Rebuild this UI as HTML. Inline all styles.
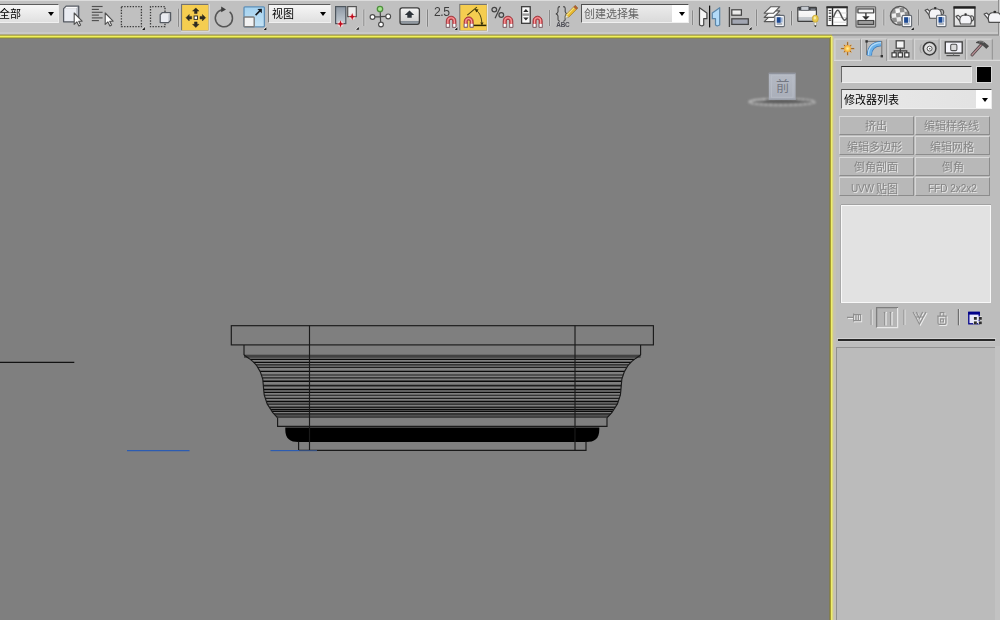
<!DOCTYPE html>
<html lang="zh"><head><meta charset="utf-8"><title>3ds Max</title>
<style>
html,body{margin:0;padding:0}
body{width:1000px;height:620px;overflow:hidden;position:relative;background:#bdbdbd;font-family:"Liberation Sans",sans-serif;font-size:11px}
.a{position:absolute;display:block}
svg text{font-family:"Liberation Sans",sans-serif}
svg text.cj{font-family:"Liberation Sans","Noto Sans CJK SC",sans-serif}
#tb{left:0;top:0;width:1000px;height:36px;background:#c0c0c0}
#vp{left:0;top:38px;width:830px;height:582px;background:#7f7f7f}
#pn{left:833px;top:36px;width:167px;height:584px;background:#bdbdbd}
.dd{box-sizing:border-box;border-top:1.4px solid #5c5c5c;border-left:1.3px solid #7a7a7a;border-bottom:1px solid #f0f0f0;border-right:1px solid #ececec;background:linear-gradient(#f6f6f6,#e0e0e0)}
.arr{width:0;height:0;border-left:3.6px solid transparent;border-right:3.6px solid transparent;border-top:4px solid #000}
.btn{height:19.2px;background:#b8b8b8;box-sizing:border-box;border-top:1.2px solid #dadada;border-left:1.2px solid #d6d6d6;border-bottom:1.6px solid #8c8c8c;border-right:1.6px solid #8c8c8c}
.em{will-change:transform;font-size:11px;line-height:13px;color:#858585;text-shadow:1px 1px 0 #e4e4e4}
</style></head><body>
<div id="tb" class="a"></div>
<div class="a" style="left:0;top:0;width:1000px;height:1.3px;background:#dcdcdc"></div>
<div class="a" style="left:0;top:32.4px;width:998px;height:1.5px;background:#c9c9c9"></div>
<div class="a" style="left:0;top:33.9px;width:998.5px;height:1.9px;background:#9d9d9d"></div>
<div class="a" style="left:998px;top:0;width:1px;height:35px;background:#8e8e8e"></div>
<div class="a" style="left:999px;top:0;width:1px;height:36px;background:#cdcdcd"></div>
<div id="pn" class="a"></div>
<div id="vp" class="a"></div>
<!-- active viewport border (yellow, softly blurred as in source) -->
<div class="a" style="left:0;top:34px;width:832px;height:1px;background:#aea986"></div>
<div class="a" style="left:0;top:35px;width:832.4px;height:1px;background:#b6b048"></div>
<div class="a" style="left:0;top:36px;width:832.4px;height:1px;background:#eff05e"></div>
<div class="a" style="left:0;top:37px;width:832px;height:1px;background:#bebe3c"></div>
<div class="a" style="left:0;top:38px;width:830px;height:1px;background:#82825c"></div>
<div class="a" style="left:829px;top:38px;width:1px;height:582px;background:#807c54"></div>
<div class="a" style="left:830px;top:37px;width:1px;height:583px;background:#a69c30"></div>
<div class="a" style="left:831px;top:36px;width:1px;height:584px;background:#eeee6c"></div>
<div class="a" style="left:832px;top:36px;width:1px;height:584px;background:#dcd880"></div>
<div class="a" style="left:833px;top:37px;width:1px;height:583px;background:#c9c4a6"></div>
<div class="a" style="left:834px;top:38px;width:1.6px;height:582px;background:#c4c0b6"></div>
<!-- toolbar dropdowns -->
<div class="a dd" style="left:-3px;top:3.6px;width:62px;height:19px"></div>
<div class="a arr" style="left:47.8px;top:11.8px"></div>
<div class="a dd" style="left:268.4px;top:3.6px;width:63px;height:19px"></div>
<div class="a arr" style="left:320.4px;top:11.8px"></div>
<div class="a dd" style="left:581px;top:3.6px;width:108px;height:19px;background:linear-gradient(#ececec,#dadada);border-left:1.6px solid #555;border-top:1.6px solid #4e4e4e"></div>
<div class="a" style="left:672px;top:5.4px;width:16px;height:16.2px;background:#fff"></div>
<div class="a arr" style="left:678.5px;top:11.8px"></div>
<!-- command panel widgets -->
<div class="a" style="left:840.6px;top:65.6px;width:131.6px;height:17.4px;box-sizing:border-box;background:#e1e1e1;border-top:1.8px solid #2c2c2c;border-left:1.6px solid #686868;border-bottom:1px solid #efefef;border-right:1px solid #ebebeb"></div>
<div class="a" style="left:976.2px;top:65.6px;width:15.8px;height:17.6px;background:#d8d8d8"></div>
<div class="a" style="left:977.2px;top:66.6px;width:13.9px;height:15.9px;background:#000"></div>
<div class="a" style="left:840.6px;top:88.6px;width:151.6px;height:20.2px;box-sizing:border-box;background:linear-gradient(90deg,#e9e9e9,#e2e2e2);border-top:1.8px solid #4e4e4e;border-left:1.8px solid #6c6c6c;border-bottom:1px solid #eee;border-right:1px solid #eaeaea"></div>
<div class="a" style="left:976.4px;top:90.4px;width:15px;height:17.5px;background:#fff"></div>
<div class="a arr" style="left:982.4px;top:97.6px"></div>
<div class="a btn" style="left:839px;top:115.8px;width:75px"></div>
<div class="a btn" style="left:914.7px;top:115.8px;width:75.8px"></div>
<div class="a btn" style="left:839px;top:136.3px;width:75px"></div>
<div class="a btn" style="left:914.7px;top:136.3px;width:75.8px"></div>
<div class="a btn" style="left:839px;top:156.8px;width:75px"></div>
<div class="a btn" style="left:914.7px;top:156.8px;width:75.8px"></div>
<div class="a btn" style="left:839px;top:177.3px;width:75px"></div>
<div class="a btn" style="left:914.7px;top:177.3px;width:75.8px"></div>
<div class="a em" style="left:850.7px;top:182.2px;font-size:10px;letter-spacing:-0.2px">UVW</div>
<div class="a em" style="left:928.3px;top:182.2px;font-size:10px;letter-spacing:0;white-space:nowrap">FFD 2x2x2</div>
<div class="a" style="left:841px;top:204.6px;width:149.6px;height:98.6px;background:#e2e2e2;border:1.2px solid #f8f8f8;box-sizing:border-box;box-shadow:0 -1px 0 #a2a2a2,-1px 0 0 #a8a8a8"></div>
<div class="a" style="left:837.4px;top:337.5px;width:158.4px;height:1.3px;background:#d2d2d2"></div>
<div class="a" style="left:837.6px;top:338.8px;width:157.8px;height:1.8px;background:#282828"></div>
<div class="a" style="left:837.6px;top:340.6px;width:157.8px;height:1px;background:#c8c8c8"></div>
<div class="a" style="left:836px;top:347px;width:159.6px;height:274px;background:#bbb;border-top:1.4px solid #929292;border-left:1.4px solid #8e8e8e;border-right:1.4px solid #d8d8d8;box-sizing:border-box"></div>
<div class="a" style="left:995.4px;top:346px;width:4.6px;height:274px;background:#c2c2c2"></div>
<svg class="a" style="left:0;top:38px" width="830" height="582"><rect x="244" y="316.70" width="396.60" height="3.1" fill="#424242"/><line x1="250.25" y1="321.40" x2="634.35" y2="321.40" stroke="#0a0a0a" stroke-width="1.35"/><line x1="253.66" y1="324.30" x2="630.94" y2="324.30" stroke="#0a0a0a" stroke-width="1.35"/><line x1="256.12" y1="326.90" x2="628.48" y2="326.90" stroke="#1e1e1e" stroke-width="1.15"/><line x1="257.73" y1="329.40" x2="626.87" y2="329.40" stroke="#1e1e1e" stroke-width="1.25"/><line x1="260.08" y1="333.40" x2="624.52" y2="333.40" stroke="#0a0a0a" stroke-width="1.4"/><line x1="261.37" y1="337.00" x2="623.23" y2="337.00" stroke="#1e1e1e" stroke-width="1.15"/><line x1="262.37" y1="339.90" x2="622.23" y2="339.90" stroke="#1e1e1e" stroke-width="1.15"/><line x1="262.95" y1="343.30" x2="621.65" y2="343.30" stroke="#0a0a0a" stroke-width="1.4"/><line x1="263.32" y1="347.60" x2="621.28" y2="347.60" stroke="#1e1e1e" stroke-width="1.9"/><line x1="263.66" y1="351.50" x2="620.94" y2="351.50" stroke="#0a0a0a" stroke-width="1.35"/><line x1="263.94" y1="354.40" x2="620.66" y2="354.40" stroke="#0a0a0a" stroke-width="1.35"/><line x1="264.27" y1="357.20" x2="620.33" y2="357.20" stroke="#1e1e1e" stroke-width="1.15"/><line x1="265.35" y1="360.40" x2="619.25" y2="360.40" stroke="#1e1e1e" stroke-width="1.3"/><line x1="266.39" y1="363.50" x2="618.21" y2="363.50" stroke="#0a0a0a" stroke-width="1.4"/><line x1="267.39" y1="366.20" x2="617.21" y2="366.20" stroke="#1e1e1e" stroke-width="1.3"/><line x1="269.43" y1="369.40" x2="615.17" y2="369.40" stroke="#1e1e1e" stroke-width="1.9"/><line x1="270.89" y1="371.70" x2="613.71" y2="371.70" stroke="#0a0a0a" stroke-width="1.2"/><line x1="271.91" y1="373.30" x2="612.69" y2="373.30" stroke="#0a0a0a" stroke-width="1.2"/><line x1="274.00" y1="376.00" x2="610.60" y2="376.00" stroke="#1e1e1e" stroke-width="1.3"/><path d="M275.10,377.20 L609.50,377.20 L607.00,380.10 L277.6,380.10 Z" fill="#424242"/><polyline fill="none" stroke="#1a1a1a" stroke-width="1.15" points="244.00,317.00 249.00,320.40 253.00,323.60 256.50,327.30 260.20,333.60 262.75,341.00 263.75,352.50 264.20,357.00 267.20,365.90 272.80,374.70 277.40,379.70"/><polyline fill="none" stroke="#1a1a1a" stroke-width="1.15" points="640.60,317.00 635.60,320.40 631.60,323.60 628.10,327.30 624.40,333.60 621.85,341.00 620.85,352.50 620.40,357.00 617.40,365.90 611.80,374.70 607.20,379.70"/><rect x="231.3" y="287.70" width="422.10" height="19.20" fill="none" stroke="#1a1a1a" stroke-width="1.15"/><polyline fill="none" stroke="#1a1a1a" stroke-width="1.15" points="244.00,306.90 244.00,317.00"/><polyline fill="none" stroke="#1a1a1a" stroke-width="1.15" points="640.60,306.90 640.60,317.00"/><polyline fill="none" stroke="#1a1a1a" stroke-width="1.15" points="277.60,379.70 277.60,388.40 607.00,388.40 607.00,379.70"/><path fill="#000" d="M285.3,389.40 L599.3,389.40 L599.3,391.40 C599.3,400.90 594.3,403.90 586.3,403.90 L298.3,403.90 C290.3,403.90 285.3,400.90 285.3,391.40 Z"/><polyline fill="none" stroke="#1a1a1a" stroke-width="1.15" points="298.60,403.60 298.60,412.40 586.00,412.40 586.00,403.60"/><line x1="309.50" y1="287.70" x2="309.50" y2="412.40" stroke="#1a1a1a" stroke-width="1.15"/><line x1="575.00" y1="287.70" x2="575.00" y2="412.40" stroke="#1a1a1a" stroke-width="1.15"/><line x1="0.00" y1="324.40" x2="74.30" y2="324.40" stroke="#121212" stroke-width="1.15"/><line x1="127.00" y1="412.60" x2="189.50" y2="412.60" stroke="#2c5cb2" stroke-width="1.15"/><line x1="270.50" y1="412.60" x2="299.00" y2="412.60" stroke="#2c5cb2" stroke-width="1.15"/><line x1="299.00" y1="412.70" x2="317.00" y2="412.70" stroke="#3a5a94" stroke-width="1.0"/></svg>
<svg class="a" style="left:740px;top:60px" width="90" height="60" viewBox="740 60 90 60"><defs><linearGradient id="lgvc" x1="0" y1="0" x2="0" y2="1"><stop offset="0" stop-color="#a6abb6"/><stop offset="0.12" stop-color="#b4b9c3"/><stop offset="1" stop-color="#a9aeb9"/></linearGradient><radialGradient id="rgsh"><stop offset="0" stop-color="#5e5e5e"/><stop offset="0.7" stop-color="#6c6c6c"/><stop offset="1" stop-color="#7e7e7e" stop-opacity="0"/></radialGradient></defs><filter id="fb" x="-10%" y="-60%" width="120%" height="220%"><feGaussianBlur stdDeviation="0.8"/></filter><g filter="url(#fb)"><ellipse cx="782" cy="102" rx="33" ry="3.2" fill="none" stroke="#9a9a9a" stroke-width="1.9"/><ellipse cx="782" cy="102" rx="33" ry="3.2" fill="none" stroke="#bebebe" stroke-width="1.4" stroke-dasharray="2.2 2.6"/><path d="M749.2,102.4 C750,100.2 757,99.2 766,99" fill="none" stroke="#cacaca" stroke-width="1.2"/><ellipse cx="782" cy="101.7" rx="29" ry="2.2" fill="#6e6e6e"/><ellipse cx="782" cy="101.2" rx="19" ry="2.3" fill="#5e5e5e"/></g><rect x="768.8" y="72.8" width="26.8" height="27" fill="url(#lgvc)"/><rect x="768.8" y="72.8" width="26.8" height="1.2" fill="#8e929c"/><rect x="768.8" y="98.6" width="26.8" height="1.2" fill="#9a9ea8"/><rect x="771.4" y="75.6" width="21.6" height="21.6" fill="none" stroke="#b9bec8" stroke-width="0.8"/></svg>
<svg class="a" style="left:0;top:0;will-change:transform" width="1000" height="36" font-family="Liberation Sans, sans-serif"><path d="M63.6,8.6 L66.1,6.1 L78.7,6.1 L76.2,8.6 Z" fill="#fbfbfd"/><path d="M76.2,8.6 L78.7,6.1 L78.7,19.3 L76.2,21.8 Z" fill="#bcc0c8"/><rect x="63.6" y="8.6" width="12.6" height="13.2" fill="#e9ebf1"/><path d="M63.6,8.6 L66.1,6.1 L78.7,6.1 L78.7,19.3 L76.2,21.8 L63.6,21.8 Z" fill="none" stroke="#555a62" stroke-width="1.25" stroke-linejoin="round"/><path transform="translate(74.2,13)" d="M0,0 L0,11.4 L2.7,8.9 L4.7,12.9 L6.4,12 L4.5,8.2 L7.9,8.2 Z" fill="#fff" stroke="#505050" stroke-width="1.1" stroke-linejoin="round"/><line x1="91.8" y1="6.5" x2="102.6" y2="6.5" stroke="#515151" stroke-width="1.15"/><line x1="91.8" y1="9.4" x2="98.9" y2="9.4" stroke="#515151" stroke-width="1.15"/><line x1="91.8" y1="12.3" x2="102.6" y2="12.3" stroke="#515151" stroke-width="1.15"/><line x1="91.8" y1="15.1" x2="98.9" y2="15.1" stroke="#515151" stroke-width="1.15"/><line x1="91.8" y1="17.9" x2="102.6" y2="17.9" stroke="#515151" stroke-width="1.15"/><line x1="91.8" y1="20.6" x2="98.9" y2="20.6" stroke="#515151" stroke-width="1.15"/><path transform="translate(105.2,13)" d="M0,0 L0,11.4 L2.7,8.9 L4.7,12.9 L6.4,12 L4.5,8.2 L7.9,8.2 Z" fill="#fff" stroke="#505050" stroke-width="1.1" stroke-linejoin="round"/><rect x="121.4" y="6.6" width="20" height="20.1" fill="none" stroke="#3c3c3c" stroke-width="1.3" stroke-dasharray="1.4 1.4"/><path d="M141.1,29.9 L144.9,26.1 L144.9,29.9 Z" fill="#e8e8e8"/><path d="M142.1,29.9 L144.9,27.1 L144.9,29.9 Z" fill="#111"/><path d="M165,12 L165,6.6 L150.5,6.6 L150.5,26.7 L165,26.7 L165,23" fill="none" stroke="#3c3c3c" stroke-width="1.3" stroke-dasharray="1.4 1.4"/><path d="M160.2,14.7 L162.4,12.5 L170.6,12.5 L168.4,14.7 Z" fill="#fbfbfd"/><path d="M168.4,14.7 L170.6,12.5 L170.6,20.4 L168.4,22.6 Z" fill="#bcc0c8"/><rect x="160.2" y="14.7" width="8.2" height="7.9" fill="#e9ebf1"/><path d="M160.2,14.7 L162.4,12.5 L170.6,12.5 L170.6,20.4 L168.4,22.6 L160.2,22.6 Z" fill="none" stroke="#555a62" stroke-width="1.25" stroke-linejoin="round"/><line x1="177.5" y1="8.8" x2="177.5" y2="26.8" stroke="#d2d2d2" stroke-width="0.9"/><line x1="178.4" y1="8.8" x2="178.4" y2="26.8" stroke="#747474" stroke-width="1"/><line x1="179.3" y1="8.8" x2="179.3" y2="26.8" stroke="#cfcfcf" stroke-width="0.9"/><rect x="181" y="3.8" width="28.6" height="27.8" fill="#e4e4e4"/><rect x="181" y="3.8" width="27.5" height="26.7" fill="#747474"/><rect x="182.1" y="5.0" width="26.3" height="25.4" fill="#f5cd50"/><path transform="translate(195.8,17.7) rotate(0)" d="M0,-9.8 L3.2,-6.6 L1.3,-6.6 L1.3,-4.2 L-1.3,-4.2 L-1.3,-6.6 L-3.2,-6.6 Z" fill="#2c2a22" stroke="#2c2a22" stroke-width="0.5" stroke-linejoin="round"/><path transform="translate(195.8,17.7) rotate(90)" d="M0,-9.8 L3.2,-6.6 L1.3,-6.6 L1.3,-4.2 L-1.3,-4.2 L-1.3,-6.6 L-3.2,-6.6 Z" fill="#2c2a22" stroke="#2c2a22" stroke-width="0.5" stroke-linejoin="round"/><path transform="translate(195.8,17.7) rotate(180)" d="M0,-9.8 L3.2,-6.6 L1.3,-6.6 L1.3,-4.2 L-1.3,-4.2 L-1.3,-6.6 L-3.2,-6.6 Z" fill="#2c2a22" stroke="#2c2a22" stroke-width="0.5" stroke-linejoin="round"/><path transform="translate(195.8,17.7) rotate(270)" d="M0,-9.8 L3.2,-6.6 L1.3,-6.6 L1.3,-4.2 L-1.3,-4.2 L-1.3,-6.6 L-3.2,-6.6 Z" fill="#2c2a22" stroke="#2c2a22" stroke-width="0.5" stroke-linejoin="round"/><rect x="194.1" y="16.0" width="3.4" height="3.4" fill="#fff" stroke="#3a3828" stroke-width="1"/><path d="M229.65,11.81 A8.6,8.6 0 1 1 221.97,9.82" fill="none" stroke="#555" stroke-width="1.5"/><path d="M221.2,6.6 L226,9.4 L221.2,12.2 Z" fill="#3e3e3e"/><defs><linearGradient id="lgb" x1="0" y1="0" x2="0" y2="1"><stop offset="0" stop-color="#a4d2f0"/><stop offset="1" stop-color="#c4e2f4"/></linearGradient><linearGradient id="lgw" x1="0" y1="0" x2="0" y2="1"><stop offset="0" stop-color="#f8f8f8"/><stop offset="1" stop-color="#dedede"/></linearGradient><linearGradient id="lgp" x1="0" y1="0" x2="0" y2="1"><stop offset="0" stop-color="#8e98a4"/><stop offset="1" stop-color="#c4ccd4"/></linearGradient><linearGradient id="lgk" x1="0" y1="0" x2="0" y2="1"><stop offset="0" stop-color="#f4f4f4"/><stop offset="0.8" stop-color="#d4d4d4"/><stop offset="0.82" stop-color="#889098"/><stop offset="1" stop-color="#a0a8b0"/></linearGradient><linearGradient id="lgr" x1="0" y1="0" x2="0" y2="1"><stop offset="0" stop-color="#fafafa"/><stop offset="1" stop-color="#b8b8b8"/></linearGradient><linearGradient id="lgrb" x1="0" y1="0" x2="0" y2="1"><stop offset="0" stop-color="#fdfdfd"/><stop offset="0.66" stop-color="#f2f2f2"/><stop offset="0.7" stop-color="#c6cace"/><stop offset="1" stop-color="#bcc0c4"/></linearGradient><radialGradient id="rgs" cx="0.4" cy="0.35" r="0.7"><stop offset="0" stop-color="#fff"/><stop offset="1" stop-color="#d0d0d0"/></radialGradient><clipPath id="cps"><circle cx="899.8" cy="15.8" r="9.3"/></clipPath></defs><rect x="244" y="6.8" width="20.4" height="20" rx="1" fill="url(#lgb)" stroke="#5e8eb6" stroke-width="1.3"/><rect x="244" y="17" width="10.2" height="9.8" rx="0.8" fill="#f2f2f2" stroke="#7c7c7c" stroke-width="1.4"/><path d="M255.6,15.1 L260.6,10.1" stroke="#16181c" stroke-width="1.5"/><path d="M257.4,8.9 L261.9,8.8 L261.8,13.3 Z" fill="#16181c"/><path d="M262.6,30.0 L266.4,26.2 L266.4,30.0 Z" fill="#e8e8e8"/><path d="M263.6,30.0 L266.4,27.2 L266.4,30.0 Z" fill="#111"/><rect x="335.6" y="6.6" width="10.2" height="17" fill="url(#lgp)" stroke="#4e565e" stroke-width="1.2"/><rect x="347.7" y="6.6" width="8.6" height="10" fill="#ececec" stroke="#555" stroke-width="1.2"/><circle cx="340.5" cy="23.9" r="3" fill="#f6dada" opacity="0.85"/><path transform="translate(340.5,23.9)" d="M0,-3.6 L0.9,-0.9 L3.6,0 L0.9,0.9 L0,3.6 L-0.9,0.9 L-3.6,0 L-0.9,-0.9 Z" fill="#c00c1c"/><circle cx="352.2" cy="16.7" r="3" fill="#f6dada" opacity="0.85"/><path transform="translate(352.2,16.7)" d="M0,-3.6 L0.9,-0.9 L3.6,0 L0.9,0.9 L0,3.6 L-0.9,0.9 L-3.6,0 L-0.9,-0.9 Z" fill="#c00c1c"/><path d="M355.0,29.8 L358.8,26.0 L358.8,29.8 Z" fill="#e8e8e8"/><path d="M356.0,29.8 L358.8,27.0 L358.8,29.8 Z" fill="#111"/><line x1="363.1" y1="9.5" x2="363.1" y2="26" stroke="#d2d2d2" stroke-width="0.9"/><line x1="364" y1="9.5" x2="364" y2="26" stroke="#747474" stroke-width="1"/><line x1="364.9" y1="9.5" x2="364.9" y2="26" stroke="#cfcfcf" stroke-width="0.9"/><path d="M380.2,11 L380.6,22 M374.5,16.9 L386,16.4" stroke="#484848" stroke-width="1.2" fill="none"/><circle cx="380" cy="9" r="2.7" fill="#a4e48c" stroke="#4e8e3e" stroke-width="1.3"/><circle cx="372.5" cy="17" r="2.4" fill="#fff" stroke="#4c4c4c" stroke-width="1.15"/><circle cx="388.2" cy="16.4" r="2.4" fill="#fff" stroke="#4c4c4c" stroke-width="1.15"/><circle cx="381" cy="24.5" r="2.4" fill="#fff" stroke="#4c4c4c" stroke-width="1.15"/><rect x="400" y="7.9" width="19.4" height="16.4" rx="2.2" fill="url(#lgk)" stroke="#3e3e3e" stroke-width="1.3"/><path d="M409.5,10.4 L414.2,15 L411.7,15 L411.7,17.8 L407.3,17.8 L407.3,15 L404.8,15 Z" fill="#2e343a"/><line x1="426.8" y1="9.5" x2="426.8" y2="26.7" stroke="#d2d2d2" stroke-width="0.9"/><line x1="427.7" y1="9.5" x2="427.7" y2="26.7" stroke="#747474" stroke-width="1"/><line x1="428.6" y1="9.5" x2="428.6" y2="26.7" stroke="#cfcfcf" stroke-width="0.9"/><text x="433.9" y="16.2" font-size="12.2" fill="#3c3c3c" letter-spacing="-0.35">2.5</text><path d="M446.3,27.4 L446.3,21.0 A4.8,4.8 0 0 1 455.9,21.0 L455.9,27.4 L452.8,27.4 L452.8,21.0 A1.7,1.7 0 0 0 449.4,21.0 L449.4,27.4 Z" fill="#dc4a52" stroke="#98343a" stroke-width="0.9" stroke-linejoin="round"/><path d="M447.85,23.8 L447.85,21.0 A3.25,3.25 0 0 1 454.35,21.0 L454.35,23.8" fill="none" stroke="#f6a2a2" stroke-width="1.1"/><rect x="446.5" y="23.9" width="2.7" height="3" fill="#fff"/><rect x="453.0" y="23.9" width="2.7" height="3" fill="#fff"/><path d="M446.3,23.9 L446.3,27.4 L449.4,27.4 L449.4,23.9 M452.8,23.9 L452.8,27.4 L455.9,27.4 L455.9,23.9" fill="none" stroke="#7a8088" stroke-width="0.8"/><path d="M453.6,30.0 L457.4,26.2 L457.4,30.0 Z" fill="#e8e8e8"/><path d="M454.6,30.0 L457.4,27.2 L457.4,30.0 Z" fill="#111"/><rect x="459.2" y="3.8" width="28.8" height="27.8" fill="#e4e4e4"/><rect x="459.2" y="3.8" width="27.7" height="26.7" fill="#747474"/><rect x="460.3" y="5.0" width="26.5" height="25.4" fill="#f5cd50"/><path d="M464.2,27.3 L464.2,21.4 A4.5,4.5 0 0 1 473.2,21.4 L473.2,27.3 L470.1,27.3 L470.1,21.4 A1.4,1.4 0 0 0 467.3,21.4 L467.3,27.3 Z" fill="#dc4a52" stroke="#98343a" stroke-width="0.9" stroke-linejoin="round"/><path d="M465.75,23.7 L465.75,21.4 A2.95,2.95 0 0 1 471.65,21.4 L471.65,23.7" fill="none" stroke="#f6a2a2" stroke-width="1.1"/><rect x="464.4" y="23.8" width="2.7" height="3" fill="#fff"/><rect x="470.3" y="23.8" width="2.7" height="3" fill="#fff"/><path d="M464.2,23.8 L464.2,27.3 L467.3,27.3 L467.3,23.8 M470.1,23.8 L470.1,27.3 L473.2,27.3 L473.2,23.8" fill="none" stroke="#7a8088" stroke-width="0.8"/><path d="M473.8,25.4 L486.3,25.4" stroke="#2a2600" stroke-width="1.5"/><path d="M467.3,15.2 L476.9,7.2" stroke="#4a4210" stroke-width="1.1"/><path d="M476.4,10.4 C480,13 481.8,18 481.9,24.6" fill="none" stroke="#4a4210" stroke-width="1"/><path d="M474.6,9 L478.6,9.6 L476.4,12.6 Z M480.2,22.4 L483.6,22.4 L481.9,25.2 Z" fill="#3a3408"/><circle cx="494.3" cy="9.6" r="2.35" fill="none" stroke="#444" stroke-width="1.25"/><circle cx="501.3" cy="15" r="2.35" fill="none" stroke="#444" stroke-width="1.25"/><path d="M500.5,6.7 L495.1,18.3" stroke="#444" stroke-width="1.25"/><path d="M503.2,27.4 L503.2,21.0 A4.8,4.8 0 0 1 512.8,21.0 L512.8,27.4 L509.7,27.4 L509.7,21.0 A1.7,1.7 0 0 0 506.3,21.0 L506.3,27.4 Z" fill="#dc4a52" stroke="#98343a" stroke-width="0.9" stroke-linejoin="round"/><path d="M504.75,23.8 L504.75,21.0 A3.25,3.25 0 0 1 511.25,21.0 L511.25,23.8" fill="none" stroke="#f6a2a2" stroke-width="1.1"/><rect x="503.4" y="23.9" width="2.7" height="3" fill="#fff"/><rect x="509.9" y="23.9" width="2.7" height="3" fill="#fff"/><path d="M503.2,23.9 L503.2,27.4 L506.3,27.4 L506.3,23.9 M509.7,23.9 L509.7,27.4 L512.8,27.4 L512.8,23.9" fill="none" stroke="#7a8088" stroke-width="0.8"/><rect x="521.6" y="6.7" width="8.6" height="16.6" fill="#fafafa" stroke="#363636" stroke-width="1.25"/><rect x="522.3" y="13.4" width="7.2" height="2.4" fill="#9a9a9a"/><path d="M525.9,9 L528.6,12 L523.2,12 Z M525.9,20.4 L528.6,17.4 L523.2,17.4 Z" fill="#2c2c2c"/><path d="M533,27.4 L533,20.8 A4.6,4.6 0 0 1 542.2,20.8 L542.2,27.4 L539.1,27.4 L539.1,20.8 A1.5,1.5 0 0 0 536.1,20.8 L536.1,27.4 Z" fill="#dc4a52" stroke="#98343a" stroke-width="0.9" stroke-linejoin="round"/><path d="M534.55,23.8 L534.55,20.8 A3.05,3.05 0 0 1 540.65,20.8 L540.65,23.8" fill="none" stroke="#f6a2a2" stroke-width="1.1"/><rect x="533.2" y="23.9" width="2.7" height="3" fill="#fff"/><rect x="539.3" y="23.9" width="2.7" height="3" fill="#fff"/><path d="M533,23.9 L533,27.4 L536.1,27.4 L536.1,23.9 M539.1,23.9 L539.1,27.4 L542.2,27.4 L542.2,23.9" fill="none" stroke="#7a8088" stroke-width="0.8"/><line x1="548.5" y1="10" x2="548.5" y2="26" stroke="#d2d2d2" stroke-width="0.9"/><line x1="549.4" y1="10" x2="549.4" y2="26" stroke="#747474" stroke-width="1"/><line x1="550.3" y1="10" x2="550.3" y2="26" stroke="#cfcfcf" stroke-width="0.9"/><path d="M560,6.6 C557.2,6.6 558.2,9.6 558,11.6 C557.8,13 557,13.7 555.9,13.9 C557,14.1 557.8,14.8 558,16.2 C558.2,18.2 557.2,21.3 560,21.3" fill="none" stroke="#484848" stroke-width="1.1"/><path d="M563.2,6.6 C566,6.6 565,9.6 565.2,11.6 C565.4,13 566.2,13.7 567.3,13.9 C566.2,14.1 565.4,14.8 565.2,16.2 C565,18.2 566,21.3 563.2,21.3" fill="none" stroke="#484848" stroke-width="1.1"/><g transform="translate(565.2,18.2) rotate(-45.5)"><path d="M0,0 L3.2,-1.9 L3.2,1.9 Z" fill="#f6f2dc" stroke="#8a8264" stroke-width="0.5"/><rect x="3.2" y="-1.9" width="10.6" height="3.8" fill="#e6b830"/><rect x="3.2" y="-1.9" width="10.6" height="1.5" fill="#f8e27c"/><rect x="13.8" y="-1.9" width="2.4" height="3.8" fill="#b45e32"/><path d="M3.2,-1.9 L16.2,-1.9 L16.2,1.9 L3.2,1.9" fill="none" stroke="#86601c" stroke-width="0.5"/></g><text x="556.3" y="27.2" font-size="6.4" font-weight="bold" fill="#4c4c54" letter-spacing="-0.25">ABC</text><line x1="691.5" y1="10.5" x2="691.5" y2="25" stroke="#d2d2d2" stroke-width="0.9"/><line x1="692.4" y1="10.5" x2="692.4" y2="25" stroke="#747474" stroke-width="1"/><line x1="693.3" y1="10.5" x2="693.3" y2="25" stroke="#cfcfcf" stroke-width="0.9"/><path d="M699.5,7.7 L706.9,12.9 L706.9,18.7 L703.7,18.7 L703.7,25 L702,26 L699.5,25 Z" fill="#f6f6f6" stroke="#474747" stroke-width="1.2" stroke-linejoin="round"/><path d="M719.7,7.7 L712.3,12.9 L712.3,18.7 L715.5,18.7 L715.5,25 L717.2,26 L719.7,25 Z" fill="#b2daf8" stroke="#5c86a8" stroke-width="1.2" stroke-linejoin="round"/><line x1="709.6" y1="5.6" x2="709.6" y2="27.4" stroke="#111" stroke-width="1.25"/><line x1="729.4" y1="7" x2="729.4" y2="27" stroke="#454545" stroke-width="1.3"/><rect x="731.8" y="9.8" width="9.6" height="5.4" fill="url(#lgw)" stroke="#454545" stroke-width="1.25"/><rect x="731.8" y="18.8" width="16.5" height="5.6" fill="#a2a6b2" stroke="#454545" stroke-width="1.25"/><path d="M747.8,29.8 L751.6,26.0 L751.6,29.8 Z" fill="#e8e8e8"/><path d="M748.8,29.8 L751.6,27.0 L751.6,29.8 Z" fill="#111"/><line x1="755.5" y1="9.5" x2="755.5" y2="26" stroke="#d2d2d2" stroke-width="0.9"/><line x1="756.4" y1="9.5" x2="756.4" y2="26" stroke="#747474" stroke-width="1"/><line x1="757.3" y1="9.5" x2="757.3" y2="26" stroke="#cfcfcf" stroke-width="0.9"/><path d="M764.2,21.6 L770.8,15.1 L779.8,15.1 L773.6,21.6 Z" fill="#fbfbfb" stroke="#585858" stroke-width="1.15" stroke-linejoin="round"/><path d="M764.2,17.4 L770.8,10.9 L779.8,10.9 L773.6,17.4 Z" fill="#fbfbfb" stroke="#585858" stroke-width="1.15" stroke-linejoin="round"/><path d="M764.2,13.2 L770.8,6.7 L779.8,6.7 L773.6,13.2 Z" fill="#fbfbfb" stroke="#585858" stroke-width="1.15" stroke-linejoin="round"/><rect x="774.8" y="15.4" width="9.6" height="11.2" rx="1" fill="#f6f7fa" stroke="#646a72" stroke-width="1.1"/><rect x="776.7" y="17.2" width="4.03" height="5.60" fill="#1d4a94"/><rect x="781.23" y="17.4" width="1.3" height="5.15" fill="#7f9cc6"/><rect x="776.7" y="23.3" width="5.6" height="1.4" fill="#8e96a2"/><line x1="790.7" y1="11" x2="790.7" y2="25.4" stroke="#d2d2d2" stroke-width="0.9"/><line x1="791.6" y1="11" x2="791.6" y2="25.4" stroke="#747474" stroke-width="1"/><line x1="792.5" y1="11" x2="792.5" y2="25.4" stroke="#cfcfcf" stroke-width="0.9"/><rect x="797.8" y="7.4" width="18.6" height="13.9" rx="0.6" fill="url(#lgrb)" stroke="#3e3e3e" stroke-width="1.15"/><rect x="798.3" y="7.9" width="17.6" height="2.7" fill="#40444a"/><rect x="801" y="6.4" width="7.8" height="3.8" fill="#c6cad0" stroke="#50545a" stroke-width="0.6"/><rect x="810.6" y="8.6" width="4.4" height="1.2" fill="#8a8e94"/><rect x="814.1" y="21.6" width="2.5" height="4" fill="#f2f2ec" stroke="#8a8a80" stroke-width="0.5"/><path d="M814.1,25.4 L816.6,25.4 L815.4,27.2 Z" fill="#1e1e1e"/><ellipse cx="815.3" cy="18.7" rx="3" ry="3.6" fill="#e9ca4e" stroke="#bfa034" stroke-width="0.7"/><ellipse cx="814.9" cy="17.9" rx="1.2" ry="1.7" fill="#f8eca0"/><rect x="827.1" y="7" width="20" height="18.6" fill="#fdfdfd" stroke="#3c3c3c" stroke-width="1.25"/><rect x="826.5" y="6.4" width="21.2" height="1.9" fill="#2a2a2a"/><line x1="832.5" y1="8" x2="832.5" y2="25.6" stroke="#2c2c2c" stroke-width="1.4"/><rect x="828.7" y="10.05" width="2.6" height="1.1" fill="#2e2e2e"/><rect x="828.7" y="12.55" width="2.6" height="1.1" fill="#2e2e2e"/><rect x="828.7" y="15.85" width="2.6" height="1.1" fill="#2e2e2e"/><rect x="828.7" y="17.75" width="2.6" height="1.1" fill="#2e2e2e"/><rect x="828.7" y="19.65" width="2.6" height="1.1" fill="#2e2e2e"/><path d="M833.4,17.5 L847,17.5 M833.4,22.2 L847,22.2 M833.4,13 L847,13" stroke="#c8c8c8" stroke-width="0.7"/><path d="M833.4,17.6 C835,13 836.2,10.2 837.7,10.2 C840.4,10.2 841.6,20.2 844.8,20.2 C845.8,20.2 846.4,19 847,17.6" fill="none" stroke="#565656" stroke-width="1.5"/><rect x="856" y="6.7" width="19.6" height="20.4" rx="0.9" fill="#b7b7b7" stroke="#666" stroke-width="1.15"/><rect x="856.6" y="12.8" width="18.4" height="7.6" fill="#fbfbfb"/><rect x="858" y="9" width="15.6" height="3.9" fill="#f4f4f4" stroke="#444" stroke-width="1.1"/><rect x="858" y="20.5" width="15.6" height="3.9" fill="#9e9e9e" stroke="#444" stroke-width="1.1"/><path d="M865.9,13 L865.9,16.6" stroke="#2c2c2c" stroke-width="1.3"/><path d="M862.2,16.2 L869.6,16.2 L865.9,19.9 Z" fill="#2c2c2c"/><line x1="883.1" y1="9.5" x2="883.1" y2="25.4" stroke="#d2d2d2" stroke-width="0.9"/><line x1="884" y1="9.5" x2="884" y2="25.4" stroke="#747474" stroke-width="1"/><line x1="884.9" y1="9.5" x2="884.9" y2="25.4" stroke="#cfcfcf" stroke-width="0.9"/><circle cx="899.8" cy="15.8" r="9.4" fill="url(#rgs)"/><g clip-path="url(#cps)" opacity="0.8" transform="rotate(-8 899.8 15.8)"><rect x="887.4" y="3.8" width="4.4" height="4.4" fill="#787878"/><rect x="887.4" y="12.6" width="4.4" height="4.4" fill="#787878"/><rect x="887.4" y="21.4" width="4.4" height="4.4" fill="#787878"/><rect x="891.8" y="8.2" width="4.4" height="4.4" fill="#787878"/><rect x="891.8" y="17.0" width="4.4" height="4.4" fill="#787878"/><rect x="891.8" y="25.8" width="4.4" height="4.4" fill="#787878"/><rect x="896.2" y="3.8" width="4.4" height="4.4" fill="#787878"/><rect x="896.2" y="12.6" width="4.4" height="4.4" fill="#787878"/><rect x="896.2" y="21.4" width="4.4" height="4.4" fill="#787878"/><rect x="900.6" y="8.2" width="4.4" height="4.4" fill="#787878"/><rect x="900.6" y="17.0" width="4.4" height="4.4" fill="#787878"/><rect x="900.6" y="25.8" width="4.4" height="4.4" fill="#787878"/><rect x="905.0" y="3.8" width="4.4" height="4.4" fill="#787878"/><rect x="905.0" y="12.6" width="4.4" height="4.4" fill="#787878"/><rect x="905.0" y="21.4" width="4.4" height="4.4" fill="#787878"/><rect x="909.4" y="8.2" width="4.4" height="4.4" fill="#787878"/><rect x="909.4" y="17.0" width="4.4" height="4.4" fill="#787878"/><rect x="909.4" y="25.8" width="4.4" height="4.4" fill="#787878"/></g><circle cx="899.8" cy="15.8" r="9.4" fill="none" stroke="#565656" stroke-width="1.3"/><rect x="902.2" y="15.4" width="9.4" height="11.2" rx="1" fill="#f6f7fa" stroke="#646a72" stroke-width="1.1"/><rect x="904.1" y="17.2" width="3.95" height="5.60" fill="#1d4a94"/><rect x="908.55" y="17.4" width="1.3" height="5.15" fill="#7f9cc6"/><rect x="904.1" y="23.3" width="5.4" height="1.4" fill="#8e96a2"/><path d="M910.0,30.0 L913.8,26.2 L913.8,30.0 Z" fill="#e8e8e8"/><path d="M911.0,30.0 L913.8,27.2 L913.8,30.0 Z" fill="#111"/><line x1="917.5" y1="9.5" x2="917.5" y2="25.4" stroke="#d2d2d2" stroke-width="0.9"/><line x1="918.4" y1="9.5" x2="918.4" y2="25.4" stroke="#747474" stroke-width="1"/><line x1="919.3" y1="9.5" x2="919.3" y2="25.4" stroke="#cfcfcf" stroke-width="0.9"/><g transform="translate(935.2,13.3) scale(1.0)" stroke="#4e4e4e" stroke-width="1.15" stroke-linejoin="round" stroke-linecap="round"><path d="M4.6,-3 C8.8,-5.6 9.8,0.6 6.3,1.9" fill="none"/><path d="M-5.4,2.6 L-10.2,-3.1 L-7.8,-4.1 L-4.4,-1.2 Z" fill="#f4f4f7"/><path d="M-5.4,4.9 C-7.3,0.2 -5.6,-4 -2.6,-4.3 L2.6,-4.3 C5.6,-4 7.3,0.2 5.4,4.9 Z" fill="#f4f4f7"/><ellipse cx="0" cy="-5.2" rx="1.35" ry="1.15" fill="#2e2e2e" stroke="none"/></g><rect x="936.6" y="15.2" width="9.4" height="11.4" rx="1" fill="#f6f7fa" stroke="#646a72" stroke-width="1.1"/><rect x="938.5" y="17.0" width="3.95" height="5.70" fill="#1d4a94"/><rect x="942.95" y="17.2" width="1.3" height="5.24" fill="#7f9cc6"/><rect x="938.5" y="23.3" width="5.4" height="1.4" fill="#8e96a2"/><rect x="954.1" y="7" width="20.8" height="19.2" fill="url(#lgw)" stroke="#454545" stroke-width="1.3"/><rect x="953.5" y="6.4" width="22" height="2.3" fill="#202020"/><g transform="translate(965.6,19.3) scale(0.95)" stroke="#4e4e4e" stroke-width="1.21" stroke-linejoin="round" stroke-linecap="round"><path d="M4.6,-3 C8.8,-5.6 9.8,0.6 6.3,1.9" fill="none"/><path d="M-5.4,2.6 L-10.2,-3.1 L-7.8,-4.1 L-4.4,-1.2 Z" fill="#f4f4f7"/><path d="M-5.4,4.9 C-7.3,0.2 -5.6,-4 -2.6,-4.3 L2.6,-4.3 C5.6,-4 7.3,0.2 5.4,4.9 Z" fill="#f4f4f7"/><ellipse cx="0" cy="-5.2" rx="1.35" ry="1.15" fill="#2e2e2e" stroke="none"/></g><g transform="translate(994.8,17.3) scale(1.05)" stroke="#4e4e4e" stroke-width="1.10" stroke-linejoin="round" stroke-linecap="round"><path d="M4.6,-3 C8.8,-5.6 9.8,0.6 6.3,1.9" fill="none"/><path d="M-5.4,2.6 L-10.2,-3.1 L-7.8,-4.1 L-4.4,-1.2 Z" fill="#f4f4f7"/><path d="M-5.4,4.9 C-7.3,0.2 -5.6,-4 -2.6,-4.3 L2.6,-4.3 C5.6,-4 7.3,0.2 5.4,4.9 Z" fill="#f4f4f7"/><ellipse cx="0" cy="-5.2" rx="1.35" ry="1.15" fill="#2e2e2e" stroke="none"/></g></svg>
<svg class="a" style="left:833px;top:38px" width="167" height="582" viewBox="833 38 167 582"><rect x="834" y="38.4" width="27" height="21.4" fill="#bfbfbf"/><path d="M834.9,59.8 L834.9,39.1 L860,39.1" fill="none" stroke="#d4d4d4" stroke-width="1.3"/><line x1="860.6" y1="39.4" x2="860.6" y2="59.8" stroke="#909090" stroke-width="1"/><rect x="861" y="38.4" width="26.2" height="22.6" fill="#bdbdbd"/><path d="M861.5,60.8 L861.5,38.9 L886.7,38.9" fill="none" stroke="#d9d9d9" stroke-width="1"/><line x1="886.8" y1="39.4" x2="886.8" y2="60.8" stroke="#8c8c8c" stroke-width="1"/><rect x="887.2" y="38.4" width="26.4" height="21.4" fill="#bfbfbf"/><path d="M888.1,59.8 L888.1,39.1 L912.6,39.1" fill="none" stroke="#d4d4d4" stroke-width="1.3"/><line x1="913.2" y1="39.4" x2="913.2" y2="59.8" stroke="#909090" stroke-width="1"/><rect x="913.6" y="38.4" width="26.0" height="21.4" fill="#bfbfbf"/><path d="M914.5,59.8 L914.5,39.1 L938.6,39.1" fill="none" stroke="#d4d4d4" stroke-width="1.3"/><line x1="939.2" y1="39.4" x2="939.2" y2="59.8" stroke="#909090" stroke-width="1"/><rect x="939.6" y="38.4" width="26.2" height="21.4" fill="#bfbfbf"/><path d="M940.5,59.8 L940.5,39.1 L964.8,39.1" fill="none" stroke="#d4d4d4" stroke-width="1.3"/><line x1="965.4" y1="39.4" x2="965.4" y2="59.8" stroke="#909090" stroke-width="1"/><rect x="965.8" y="38.4" width="26.9" height="21.4" fill="#bfbfbf"/><path d="M966.7,59.8 L966.7,39.1 L991.7,39.1" fill="none" stroke="#d4d4d4" stroke-width="1.3"/><line x1="992.3" y1="39.4" x2="992.3" y2="59.8" stroke="#909090" stroke-width="1"/><rect x="834" y="59.8" width="27" height="1.2" fill="#dadada"/><rect x="887.2" y="59.8" width="112.8" height="1.2" fill="#dadada"/><defs><radialGradient id="rgst"><stop offset="0" stop-color="#fff2a8"/><stop offset="0.5" stop-color="#fcc850"/><stop offset="0.85" stop-color="#f2a63a" stop-opacity="0.85"/><stop offset="1" stop-color="#f0a030" stop-opacity="0"/></radialGradient><linearGradient id="lgarc" x1="0" y1="0" x2="1" y2="1"><stop offset="0" stop-color="#9ad0f4"/><stop offset="1" stop-color="#3c86cc"/></linearGradient><radialGradient id="rgmo" cx="0.4" cy="0.4" r="0.7"><stop offset="0" stop-color="#f4f4f4"/><stop offset="1" stop-color="#bcbcbc"/></radialGradient></defs><line x1="847.6" y1="48.6" x2="854.10" y2="48.60" stroke="#f0a848" stroke-width="1.9" stroke-linecap="round" opacity="0.45"/><line x1="847.6" y1="48.6" x2="854.10" y2="48.60" stroke="#8e5a1e" stroke-width="0.9"/><line x1="847.6" y1="48.6" x2="851.14" y2="52.14" stroke="#f0a848" stroke-width="1.9" stroke-linecap="round" opacity="0.45"/><line x1="847.6" y1="48.6" x2="851.14" y2="52.14" stroke="#8e5a1e" stroke-width="0.9"/><line x1="847.6" y1="48.6" x2="847.60" y2="55.10" stroke="#f0a848" stroke-width="1.9" stroke-linecap="round" opacity="0.45"/><line x1="847.6" y1="48.6" x2="847.60" y2="55.10" stroke="#8e5a1e" stroke-width="0.9"/><line x1="847.6" y1="48.6" x2="844.06" y2="52.14" stroke="#f0a848" stroke-width="1.9" stroke-linecap="round" opacity="0.45"/><line x1="847.6" y1="48.6" x2="844.06" y2="52.14" stroke="#8e5a1e" stroke-width="0.9"/><line x1="847.6" y1="48.6" x2="841.10" y2="48.60" stroke="#f0a848" stroke-width="1.9" stroke-linecap="round" opacity="0.45"/><line x1="847.6" y1="48.6" x2="841.10" y2="48.60" stroke="#8e5a1e" stroke-width="0.9"/><line x1="847.6" y1="48.6" x2="844.06" y2="45.06" stroke="#f0a848" stroke-width="1.9" stroke-linecap="round" opacity="0.45"/><line x1="847.6" y1="48.6" x2="844.06" y2="45.06" stroke="#8e5a1e" stroke-width="0.9"/><line x1="847.6" y1="48.6" x2="847.60" y2="42.10" stroke="#f0a848" stroke-width="1.9" stroke-linecap="round" opacity="0.45"/><line x1="847.6" y1="48.6" x2="847.60" y2="42.10" stroke="#8e5a1e" stroke-width="0.9"/><line x1="847.6" y1="48.6" x2="851.14" y2="45.06" stroke="#f0a848" stroke-width="1.9" stroke-linecap="round" opacity="0.45"/><line x1="847.6" y1="48.6" x2="851.14" y2="45.06" stroke="#8e5a1e" stroke-width="0.9"/><circle cx="847.6" cy="48.6" r="4.1" fill="url(#rgst)"/><path d="M866.6,41.4 L866.6,55 M866.6,41.4 L881.8,41.4 L881.8,56.2" fill="none" stroke="#6a6a6a" stroke-width="0.9"/><path d="M869,56.2 L881.8,56.2" stroke="#a0a0a0" stroke-width="0.8"/><path d="M869.4,55.4 C869.4,48.2 873.6,44 881,43.6" fill="none" stroke="#3a78b8" stroke-width="5.2" stroke-linecap="butt"/><path d="M869.4,55.4 C869.4,48.2 873.6,44 881,43.6" fill="none" stroke="#6cb2ea" stroke-width="3.6"/><path d="M868.4,55 C868.4,47.4 872.8,43 881,42.6" fill="none" stroke="#b6dcf8" stroke-width="1.2"/><rect x="865.4" y="40.2" width="2.4" height="2.4" fill="#333"/><rect x="880.6" y="55" width="2.4" height="2.4" fill="#333"/><path d="M900.3,48 L900.3,53 M894.2,53 L894.2,50.8 L906.8,50.8 L906.8,53" fill="none" stroke="#3e3e3e" stroke-width="1.2"/><rect x="896.2" y="40.8" width="8" height="7.4" fill="#f4f4f4" stroke="#4a4a4a" stroke-width="1.3"/><rect x="892.0" y="52.8" width="4.2" height="4.2" fill="#fff" stroke="#3a3a3a" stroke-width="1.2"/><rect x="898.2" y="52.8" width="4.2" height="4.2" fill="#fff" stroke="#3a3a3a" stroke-width="1.2"/><rect x="904.7" y="52.8" width="4.2" height="4.2" fill="#fff" stroke="#3a3a3a" stroke-width="1.2"/><path d="M921.4,44.4 C919.6,47 919.6,50.4 921.4,53" fill="none" stroke="#9c9c9c" stroke-width="0.9"/><circle cx="929.6" cy="48.6" r="6.3" fill="url(#rgmo)" stroke="#3a3a3a" stroke-width="1.5"/><circle cx="929.6" cy="48.6" r="2.5" fill="#fafafa" stroke="#555" stroke-width="1"/><circle cx="929.8" cy="48.7" r="0.8" fill="#555"/><rect x="945.3" y="41.9" width="16.9" height="11.2" fill="#f4f4fa" stroke="#3a3a3a" stroke-width="1.3"/><rect x="950.7" y="44.3" width="6.2" height="6.3" rx="1.4" fill="#dcdcdc" stroke="#505050" stroke-width="1.05"/><path d="M946.4,55.6 L959.8,55.6" stroke="#505050" stroke-width="1.2"/><path d="M953.6,53.4 L953.6,55.4" stroke="#707070" stroke-width="1"/><path d="M972,55 L981.4,44.6" stroke="#52484a" stroke-width="3" stroke-linecap="round"/><path d="M972,55 L981.4,44.6" stroke="#b88e94" stroke-width="1.3" stroke-linecap="round"/><path d="M976,42.6 C978.4,40.8 982,40.6 984.2,42.4 L988.6,46 L986.4,48.4 L984.4,46.8 C983,45.2 981.4,44 979.6,43.4 C978.4,43 977,43 976,42.6 Z" fill="#4c4c4c" stroke="#383838" stroke-width="0.6"/><path d="M979,42 C981,41.4 982.6,41.8 984,42.8" stroke="#8a8a8a" stroke-width="0.8" fill="none"/><path d="M847,317.4 L853.4,317.4 M853.6,313.4 L853.6,321.6 M853.6,314.6 L860.6,314.6 L860.6,320.6 L853.6,320.6 M856,314.6 L856,320.6 M858.4,314.6 L858.4,320.6" transform="translate(1,1)" fill="none" stroke="#ececec" stroke-width="1.1" /><path d="M847,317.4 L853.4,317.4 M853.6,313.4 L853.6,321.6 M853.6,314.6 L860.6,314.6 L860.6,320.6 L853.6,320.6 M856,314.6 L856,320.6 M858.4,314.6 L858.4,320.6" fill="none" stroke="#8f8f8f" stroke-width="1.1" /><line x1="871.2" y1="309.6" x2="871.2" y2="325" stroke="#868686" stroke-width="1"/><line x1="872.2" y1="309.6" x2="872.2" y2="325" stroke="#e2e2e2" stroke-width="1"/><rect x="876" y="307" width="22" height="21" fill="#b6b6b6"/><path d="M876.6,328 L876.6,307.6 L898,307.6" fill="none" stroke="#7e7e7e" stroke-width="1.3"/><path d="M876.6,327.6 L897.6,327.6 L897.6,308" fill="none" stroke="#e8e8e8" stroke-width="1.2"/><path d="M884.0,312 L884.8,313.2 L884.8,325.4" fill="none" stroke="#8a8a8a" stroke-width="1.1"/><path d="M886.8,312 L886.0,313.2 L886.0,325.4" fill="none" stroke="#ececec" stroke-width="1.2"/><path d="M890.0,312 L890.8,313.2 L890.8,325.4" fill="none" stroke="#8a8a8a" stroke-width="1.1"/><path d="M892.8,312 L892.0,313.2 L892.0,325.4" fill="none" stroke="#ececec" stroke-width="1.2"/><line x1="904" y1="309.6" x2="904" y2="325" stroke="#868686" stroke-width="1"/><line x1="905" y1="309.6" x2="905" y2="325" stroke="#e2e2e2" stroke-width="1"/><path d="M913,312 L919.4,324 L926,312 M916.4,312 L919.4,318.4 L922.6,312 M915.4,317 L923.6,317" transform="translate(1,1)" fill="none" stroke="#ececec" stroke-width="1.1" /><path d="M913,312 L919.4,324 L926,312 M916.4,312 L919.4,318.4 L922.6,312 M915.4,317 L923.6,317" fill="none" stroke="#8f8f8f" stroke-width="1.1" /><path d="M938,316.2 L946,316.2 L946,323 C946,324 945.4,324.4 944.6,324.4 L939.4,324.4 C938.6,324.4 938,324 938,323 Z M937.2,316 L946.8,316 M940.2,315.6 L940.2,312.6 L943.8,312.6 L943.8,315.6 M940.6,319 L943.4,319 L943.4,322 L940.6,322 Z" transform="translate(1,1)" fill="none" stroke="#ececec" stroke-width="1.1" /><path d="M938,316.2 L946,316.2 L946,323 C946,324 945.4,324.4 944.6,324.4 L939.4,324.4 C938.6,324.4 938,324 938,323 Z M937.2,316 L946.8,316 M940.2,315.6 L940.2,312.6 L943.8,312.6 L943.8,315.6 M940.6,319 L943.4,319 L943.4,322 L940.6,322 Z" fill="none" stroke="#8f8f8f" stroke-width="1.1" /><line x1="958.4" y1="309" x2="958.4" y2="325.2" stroke="#5e5e5e" stroke-width="1.1"/><line x1="959.4" y1="309" x2="959.4" y2="325.2" stroke="#dcdcdc" stroke-width="0.9"/><rect x="968.8" y="312.4" width="10.4" height="11.4" fill="#e6e6fa" stroke="#00008a" stroke-width="1.3"/><rect x="968.2" y="311.8" width="11.6" height="2.8" fill="#00008a"/><rect x="973.2" y="316.4" width="3.6" height="3.4" fill="#f4f4f4"/><rect x="973.9" y="317.0" width="2.9" height="2.8" fill="#2c2c2c"/><rect x="978.2" y="316.4" width="3.6" height="3.4" fill="#f4f4f4"/><rect x="978.9" y="317.0" width="2.9" height="2.8" fill="#2c2c2c"/><rect x="973.2" y="320.8" width="3.6" height="3.4" fill="#f4f4f4"/><rect x="973.9" y="321.4" width="2.9" height="2.8" fill="#2c2c2c"/><rect x="978.2" y="320.8" width="3.6" height="3.4" fill="#f4f4f4"/><rect x="978.9" y="321.4" width="2.9" height="2.8" fill="#2c2c2c"/></svg>
<svg class="a" role="img" aria-label="全部" style="left:-1.5px;top:8.1px" width="24" height="14"><text class="cj" x="0" y="9.68" font-size="11" fill="#000">全部</text></svg>
<svg class="a" role="img" aria-label="视图" style="left:271.8px;top:8.1px" width="24" height="14"><text class="cj" x="0" y="9.68" font-size="11" fill="#000">视图</text></svg>
<svg class="a" role="img" aria-label="创建选择集" style="left:584.2px;top:7.6px" width="57" height="14"><text class="cj" x="0" y="9.68" font-size="11" fill="#646464">创建选择集</text></svg>
<svg class="a" role="img" aria-label="修改器列表" style="left:844px;top:93.6px" width="57" height="14"><text class="cj" x="0" y="9.68" font-size="11" fill="#000">修改器列表</text></svg>
<svg class="a" role="img" aria-label="挤出" style="left:864.8px;top:120.2px" width="24" height="14"><text class="cj" x="1" y="10.68" font-size="11" fill="#e4e4e4">挤出</text><text class="cj" x="0" y="9.68" font-size="11" fill="#858585">挤出</text></svg>
<svg class="a" role="img" aria-label="编辑样条线" style="left:923.9px;top:120.2px" width="57" height="14"><text class="cj" x="1" y="10.68" font-size="11" fill="#e4e4e4">编辑样条线</text><text class="cj" x="0" y="9.68" font-size="11" fill="#858585">编辑样条线</text></svg>
<svg class="a" role="img" aria-label="编辑多边形" style="left:847.2px;top:140.7px" width="57" height="14"><text class="cj" x="1" y="10.68" font-size="11" fill="#e4e4e4">编辑多边形</text><text class="cj" x="0" y="9.68" font-size="11" fill="#858585">编辑多边形</text></svg>
<svg class="a" role="img" aria-label="编辑网格" style="left:930.4px;top:140.7px" width="46" height="14"><text class="cj" x="1" y="10.68" font-size="11" fill="#e4e4e4">编辑网格</text><text class="cj" x="0" y="9.68" font-size="11" fill="#858585">编辑网格</text></svg>
<svg class="a" role="img" aria-label="倒角剖面" style="left:853.8px;top:161.2px" width="46" height="14"><text class="cj" x="1" y="10.68" font-size="11" fill="#e4e4e4">倒角剖面</text><text class="cj" x="0" y="9.68" font-size="11" fill="#858585">倒角剖面</text></svg>
<svg class="a" role="img" aria-label="倒角" style="left:942.0px;top:161.2px" width="24" height="14"><text class="cj" x="1" y="10.68" font-size="11" fill="#e4e4e4">倒角</text><text class="cj" x="0" y="9.68" font-size="11" fill="#858585">倒角</text></svg>
<svg class="a" role="img" aria-label="贴图" style="left:875.5px;top:182.5px" width="24" height="14"><text class="cj" x="1" y="10.68" font-size="11" fill="#e4e4e4">贴图</text><text class="cj" x="0" y="9.68" font-size="11" fill="#858585">贴图</text></svg>
<svg class="a" role="img" aria-label="前" style="left:776.1px;top:79.3px" width="15" height="16"><text class="cj" x="0" y="11.79" font-size="13.4" fill="#747882">前</text></svg>
</body></html>
